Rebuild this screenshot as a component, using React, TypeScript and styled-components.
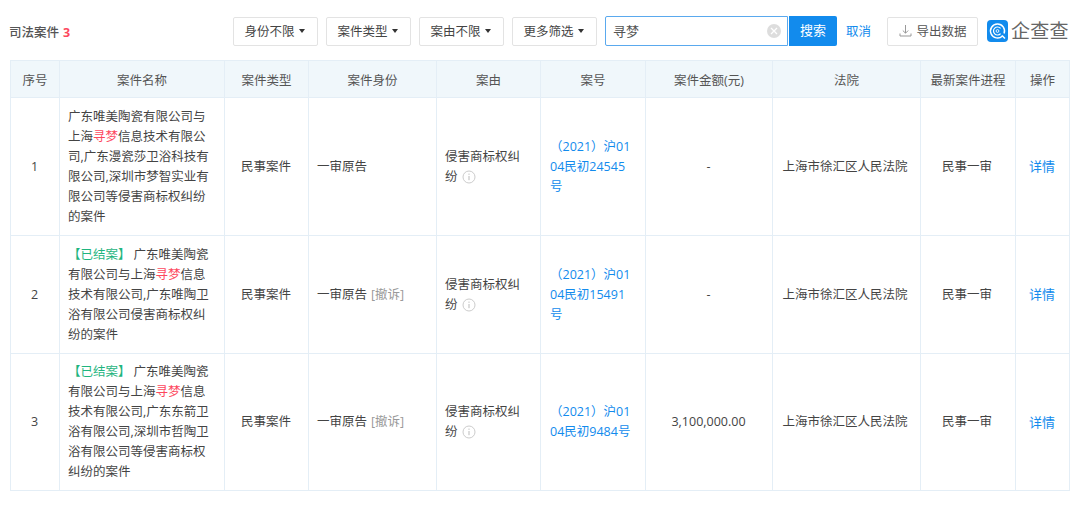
import React from "react";
import styled, { createGlobalStyle } from "styled-components";

const Global = createGlobalStyle`
  html, body { margin: 0; padding: 0; background: #fff; }
  body { font-family: "Open Sans", "Noto Sans CJK SC", sans-serif; color: #333; }
`;

const Page = styled.div`
  width: 1080px;
  height: 505px;
  overflow: hidden;
  padding: 16px 0 0 10px;
  box-sizing: border-box;
`;

const Toolbar = styled.div`
  display: flex;
  align-items: center;
  height: 30px;
  width: 1060px;
  margin-bottom: 14px;
`;

const Title = styled.div`
  width: 223px;
  font-size: 12.5px;
  color: #555;
  font-weight: 500;
  white-space: nowrap;
  text-indent: -1px;
`;

const Count = styled.span`
  color: #fd485e;
  font-weight: 700;
  margin-left: 4px;
`;

const FilterButton = styled.button`
  height: 29px;
  box-sizing: border-box;
  width: 85px;
  margin-right: 8px;
  padding: 0 2px 0 0;
  background: #fff;
  border: 1px solid #e3e3e3;
  border-radius: 2px;
  font: inherit;
  font-size: 12.5px;
  line-height: 25px;
  color: #444;
  display: flex;
  align-items: center;
  justify-content: center;
  gap: 4px;
`;

const Caret = styled.i`
  width: 0;
  height: 0;
  border-left: 3.5px solid transparent;
  border-right: 3.5px solid transparent;
  border-top: 4px solid #333;
`;

const SearchBox = styled.div`
  width: 183px;
  height: 30px;
  box-sizing: border-box;
  border: 1px solid #5aa9ee;
  border-radius: 2px 0 0 2px;
  display: flex;
  align-items: center;
  justify-content: space-between;
  padding: 0 6px 2px 7px;
  font-size: 13px;
  color: #555;
`;

const ClearDot = styled.span`
  width: 14px;
  height: 14px;
  margin-top: 2px;
  border-radius: 50%;
  background: #ddd;
  display: flex;
  align-items: center;
  justify-content: center;
`;

const SearchButton = styled.button`
  width: 48px;
  height: 30px;
  border: 0;
  margin-left: 1px;
  padding: 0 0 3px;
  background: #128bed;
  color: #fff;
  border-radius: 0 2px 2px 0;
  font: inherit;
  font-size: 13px;
`;

const CancelLink = styled.span`
  color: #128bed;
  font-size: 12.5px;
  margin: 0 16px 2px 9px;
  white-space: nowrap;
`;

const ExportButton = styled.button`
  width: 91px;
  height: 29px;
  box-sizing: border-box;
  padding: 0 0 2px;
  background: #fff;
  border: 1px solid #e3e3e3;
  border-radius: 2px;
  font: inherit;
  font-size: 12.5px;
  color: #555;
  display: flex;
  align-items: center;
  justify-content: center;
  gap: 5px;
`;

const Logo = styled.div`
  display: flex;
  align-items: center;
  margin-left: 9px;
  gap: 3px;
`;

const LogoText = styled.span`
  font-size: 19px;
  font-weight: 400;
  letter-spacing: 0.3px;
  color: #666;
  line-height: 22px;
  white-space: nowrap;
`;

const Table = styled.table`
  border-collapse: collapse;
  table-layout: fixed;
  width: 1059px;
  font-size: 12.5px;
  color: #444;
`;

const HeadCell = styled.th`
  height: 37px;
  padding: 0;
  box-sizing: border-box;
  background: #f0f7fb;
  border: 1px solid #e4eef6;
  font-weight: 400;
  color: #555;
  text-align: center;
`;

const Cell = styled.td<{ $align?: string }>`
  padding: 0 10px 0 8px;
  border: 1px solid #e4eef6;
  line-height: 20px;
  text-align: ${(p) => p.$align || "left"};
  vertical-align: middle;
  word-break: break-all;
`;

const CenterCell = styled(Cell)`
  padding: 0 10px 0 9px;
`;

const CourtCell = styled(Cell)`
  padding: 0 11px 0 8px;
`;

const Row = styled.tr<{ $h: number }>`
  height: ${(p) => p.$h}px;
`;

const Closed = styled.span`
  color: #1fb57f;
  margin-right: 3px;
`;

const Highlight = styled.span`
  color: #fd485e;
`;

const Muted = styled.span`
  color: #999;
  margin-left: 4px;
`;

const Link = styled.span`
  color: #128bed;
`;

const DetailLink = styled(Link)`
  font-size: 13px;
`;

const CaseNoCell = styled(Cell)`
  padding: 0 12px 0 9px;
`;

const InfoIcon = styled.span`
  display: inline-flex;
  vertical-align: -3px;
  margin-left: 4px;
`;

const Info = () => (
  <InfoIcon>
    <svg width="14" height="14" viewBox="0 0 14 14" fill="none">
      <circle cx="7" cy="7" r="6" stroke="#ccc" />
      <path d="M7 6v4.2M7 3.6v1.2" stroke="#bbb" />
    </svg>
  </InfoIcon>
);

const widths = [49, 165, 84, 128, 104, 105, 127, 148, 95, 54];
const heads = ["序号", "案件名称", "案件类型", "案件身份", "案由", "案号", "案件金额(元)", "法院", "最新案件进程", "操作"];

const rows = [
  {
    h: 138,
    no: "1",
    closed: false,
    name: ["广东唯美陶瓷有限公司与上海", "信息技术有限公司,广东漫瓷莎卫浴科技有限公司,深圳市梦智实业有限公司等侵害商标权纠纷的案件"],
    revoked: false,
    caseNo: "（2021）沪0104民初24545号",
    amount: "-",
  },
  {
    h: 118,
    no: "2",
    closed: true,
    name: ["广东唯美陶瓷有限公司与上海", "信息技术有限公司,广东唯陶卫浴有限公司侵害商标权纠纷的案件"],
    revoked: true,
    caseNo: "（2021）沪0104民初15491号",
    amount: "-",
  },
  {
    h: 137,
    no: "3",
    closed: true,
    name: ["广东唯美陶瓷有限公司与上海", "信息技术有限公司,广东东箭卫浴有限公司,深圳市哲陶卫浴有限公司等侵害商标权纠纷的案件"],
    revoked: true,
    caseNo: "（2021）沪0104民初9484号",
    amount: "3,100,000.00",
  },
];

export default function App() {
  return (
    <Page>
      <Global />
      <Toolbar>
        <Title>
          司法案件<Count>3</Count>
        </Title>
        {["身份不限", "案件类型", "案由不限", "更多筛选"].map((t) => (
          <FilterButton key={t}>
            {t}
            <Caret />
          </FilterButton>
        ))}
        <SearchBox>
          寻梦
          <ClearDot>
            <svg width="8" height="8" viewBox="0 0 8 8">
              <path d="M1 1l6 6M7 1L1 7" stroke="#fff" strokeWidth="1.3" />
            </svg>
          </ClearDot>
        </SearchBox>
        <SearchButton>搜索</SearchButton>
        <CancelLink>取消</CancelLink>
        <ExportButton>
          <svg width="13" height="13" viewBox="0 0 13 13" fill="none" stroke="#999">
            <path d="M6.5 1v8M3.8 6.5l2.7 2.7 2.7-2.7M1 9.5v2.5h11V9.5" />
          </svg>
          导出数据
        </ExportButton>
        <Logo>
          <svg width="21" height="22" viewBox="0 0 21 22">
            <rect width="21" height="22" rx="4" fill="#128bed" />
            <path d="M15.45 15.95A7 7 0 1 1 17.08 13.4" fill="none" stroke="#fff" strokeWidth="1.5" />
            <path d="M15 15.5l3 3" stroke="#fff" strokeWidth="1.5" />
            <path d="M13.56 8.43A4 4 0 1 0 13.56 13.57" fill="none" stroke="#fff" strokeWidth="1.2" />
            <circle cx="10.5" cy="11" r="1.4" fill="none" stroke="#fff" strokeWidth="0.9" />
          </svg>
          <LogoText>企查查</LogoText>
        </Logo>
      </Toolbar>
      <Table>
        <colgroup>
          {widths.map((w, i) => (
            <col key={i} style={{ width: w }} />
          ))}
        </colgroup>
        <thead>
          <tr>
            {heads.map((h) => (
              <HeadCell key={h}>{h}</HeadCell>
            ))}
          </tr>
        </thead>
        <tbody>
          {rows.map((r) => (
            <Row key={r.no} $h={r.h}>
              <CenterCell $align="center">{r.no}</CenterCell>
              <Cell>
                {r.closed && <Closed>【已结案】</Closed>}
                {r.name[0]}
                <Highlight>寻梦</Highlight>
                {r.name[1]}
              </Cell>
              <CenterCell $align="center">民事案件</CenterCell>
              <Cell>
                一审原告
                {r.revoked && <Muted>[撤诉]</Muted>}
              </Cell>
              <Cell>
                侵害商标权纠纷
                <Info />
              </Cell>
              <CaseNoCell>
                <Link>{r.caseNo}</Link>
              </CaseNoCell>
              <CenterCell $align="center">{r.amount}</CenterCell>
              <CourtCell $align="center">上海市徐汇区人民法院</CourtCell>
              <Cell $align="center">民事一审</Cell>
              <CenterCell $align="center">
                <DetailLink>详情</DetailLink>
              </CenterCell>
            </Row>
          ))}
        </tbody>
      </Table>
    </Page>
  );
}
